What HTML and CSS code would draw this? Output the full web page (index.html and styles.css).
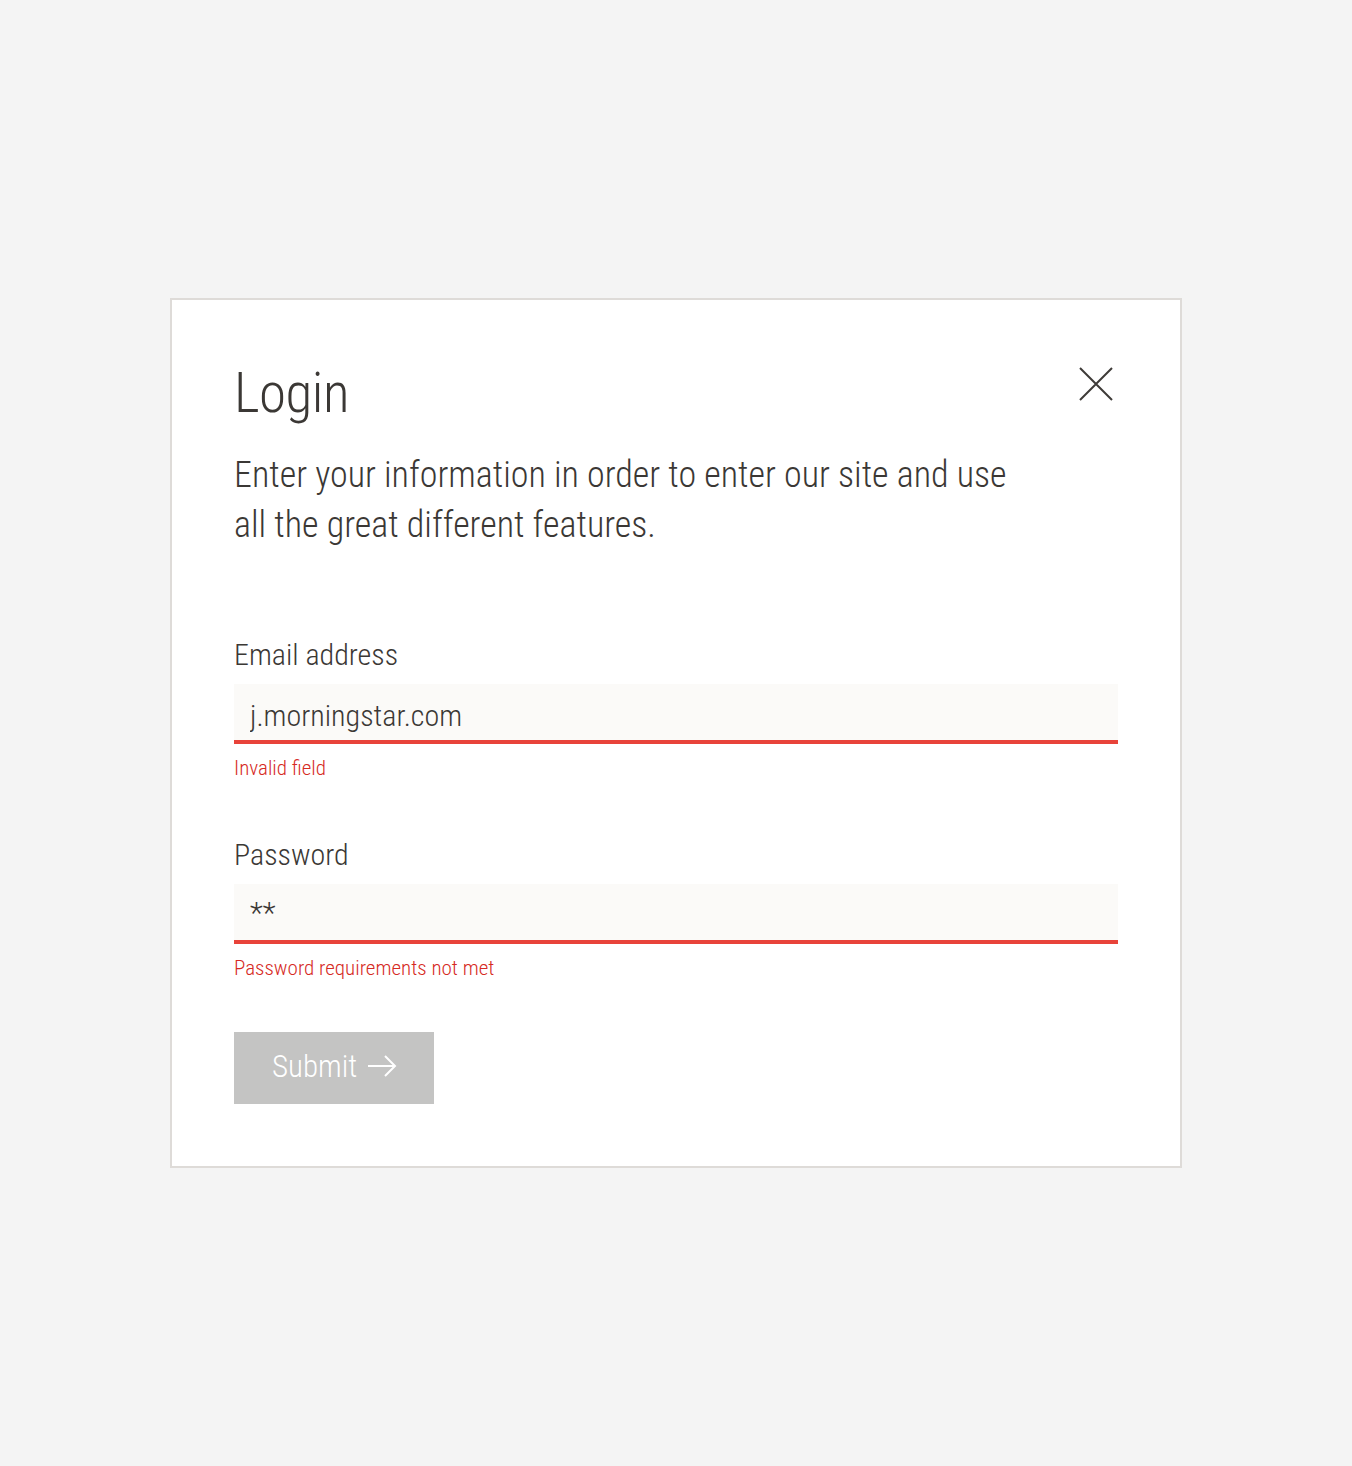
FILE: index.html
```html
<!DOCTYPE html>
<html lang="en">
<head>
<meta charset="utf-8">
<title>Login</title>
<link rel="stylesheet" href="styles.css">
</head>
<body>
<main class="page">
  <section class="card">
    <header class="card-head">
      <h1 class="title">Login</h1>
      <button class="close" type="button" aria-label="Close">
        <svg width="34" height="34" viewBox="0 0 34 34" aria-hidden="true">
          <path d="M1 1 L33 33 M33 1 L1 33" stroke="#3e3b38" stroke-width="2" fill="none"/>
        </svg>
      </button>
    </header>
    <p class="intro">Enter your information in order to enter our site and use all the great different features.</p>
    <form class="form">
      <div class="field field-email">
        <label class="label" for="email">Email address</label>
        <input class="input" id="email" type="text" value="j.morningstar.com">
        <span class="error">Invalid field</span>
      </div>
      <div class="field field-pw">
        <label class="label" for="pw">Password</label>
        <input class="input input-pw" id="pw" type="text" value="**">
        <span class="error">Password requirements not met</span>
      </div>
      <button class="submit" type="button">
        <span>Submit</span>
        <svg width="30" height="22" viewBox="0 0 30 22" aria-hidden="true">
          <path d="M1 11 H28 M18 1 L28 11 L18 21" stroke="#ffffff" stroke-width="2" fill="none"/>
        </svg>
      </button>
    </form>
  </section>
</main>
</body>
</html>
```
FILE: styles.css
```css
* { box-sizing: border-box; }
html, body { margin: 0; padding: 0; }
body {
  background: #f4f4f4;
  font-family: "Roboto Condensed", "Open Sans", sans-serif;
  font-weight: 300;
  color: #3b3835;
}
.page {
  display: flex;
  justify-content: center;
  padding-top: 298px;
  min-height: 1466px;
}
.card {
  width: 1012px;
  height: 870px;
  background: #ffffff;
  border: 2px solid #dedbd8;
  padding: 61px 62px;
}
.card-head {
  display: flex;
  justify-content: space-between;
  align-items: flex-start;
}
.title {
  margin: 0;
  font-size: 55px;
  line-height: 64px;
  font-weight: 300;
  letter-spacing: -0.5px;
}
.close {
  border: 0;
  background: none;
  padding: 0;
  margin-top: 6px;
  margin-right: 5px;
  width: 34px;
  height: 34px;
  cursor: pointer;
}
.close svg { display: block; }
.intro {
  margin: 25px 0 0 0;
  max-width: 790px;
  font-size: 36px;
  line-height: 50px;
}
.form {
  margin-top: 87px;
  display: flex;
  flex-direction: column;
  align-items: flex-start;
}
.field {
  display: flex;
  flex-direction: column;
  width: 100%;
}
.field-email { margin-bottom: 57px; }
.field-pw { margin-bottom: 52px; }
.label {
  font-size: 30px;
  line-height: 36px;
  margin-bottom: 11px;
}
.input {
  display: block;
  width: 100%;
  height: 60px;
  border: 0;
  border-bottom: 4px solid #e8433a;
  background: #fbfaf8;
  padding: 6px 16px 0 16px;
  font-family: inherit;
  font-weight: 300;
  font-size: 30px;
  color: #3b3835;
  outline: none;
}
.input-pw { padding-bottom: 6px; }
.error {
  margin-top: 12px;
  font-size: 21px;
  line-height: 24px;
  color: #d62a24;
}
.submit {
  display: flex;
  align-items: center;
  gap: 10px;
  width: 200px;
  height: 72px;
  padding: 0 0 4px 38px;
  border: 0;
  background: #c4c4c3;
  color: #ffffff;
  font-family: inherit;
  font-weight: 300;
  font-size: 31px;
}
.submit svg { display: block; }
```
